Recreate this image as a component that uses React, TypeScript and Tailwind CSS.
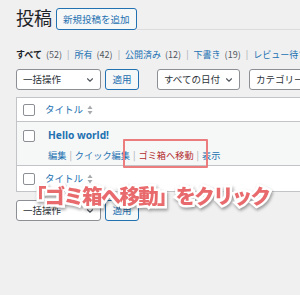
import React from "react";
import { ChevronDown } from "lucide-react";

const font = "font-['Noto_Sans_CJK_JP','Noto_Sans',sans-serif]";

function Checkbox() {
  return <span className="block w-[12px] h-[12px] shrink-0 border border-[#8c8f94] rounded-[2px] bg-white" />;
}

function SortArrows() {
  return (
    <svg width="6" height="10" viewBox="0 0 6 10" className="ml-[4px]">
      <path d="M3 0.5 L5.5 4 L0.5 4 Z" fill="#a7aaad" />
      <path d="M3 9.5 L5.5 6 L0.5 6 Z" fill="#a7aaad" />
    </svg>
  );
}

function Select({ label, width }: { label: string; width: string }) {
  return (
    <div className={`${width} h-[21px] shrink-0 flex items-center justify-between pl-[6px] pr-[5px] bg-white border border-[#8c8f94] rounded-[3px] text-[9.5px] text-[#2c3338] overflow-hidden whitespace-nowrap`}>
      <span>{label}</span>
      <ChevronDown className="w-[10px] h-[10px] shrink-0 text-[#50575e]" strokeWidth={2.6} />
    </div>
  );
}

function ApplyButton() {
  return (
    <div className="w-[34px] h-[21px] shrink-0 flex items-center justify-center bg-[#f6f7f7] border border-[#2271b1] rounded-[3px] text-[9.5px] text-[#2271b1]">
      適用
    </div>
  );
}

const filters = [
  { label: "すべて", count: "(52)", current: true },
  { label: "所有", count: "(42)" },
  { label: "公開済み", count: "(12)" },
  { label: "下書き", count: "(19)" },
  { label: "レビュー待ち", count: "(2)" },
];

export default function App() {
  return (
    <div className={`relative w-[300px] h-[295px] overflow-hidden bg-[#f0f0f1] ${font}`}>
      <div className="w-[420px] pl-[16px]">
        {/* header */}
        <div className="flex items-end h-[30px]">
          <h1 className="text-[18px] leading-none text-[#1d2327] pb-[4px] mr-[4px]">投稿</h1>
          <div className="h-[22px] px-[6px] flex items-center bg-[#f6f7f7] border border-[#2271b1] rounded-[3px] text-[9.5px] text-[#2271b1]">
            新規投稿を追加
          </div>
          <div className="flex-1 border-b border-[#dcdcde]" />
        </div>

        {/* filters */}
        <div className="mt-[17px] h-[14px] flex items-center whitespace-nowrap text-[9px] leading-none">
          {filters.map((f, i) => (
            <span key={f.label} className="flex items-center">
              {i > 0 && <span className="mx-[5px] text-[#a7aaad]">|</span>}
              <span className={f.current ? "font-bold text-[#1d2327]" : "text-[#2271b1]"}>{f.label}</span>
              <span className="ml-[4px] text-[#50575e]">{f.count}</span>
            </span>
          ))}
        </div>

        {/* bulk actions */}
        <div className="mt-[8px] flex items-center gap-[4px]">
          <Select label="一括操作" width="w-[85px]" />
          <ApplyButton />
          <div className="w-[10px]" />
          <Select label="すべての日付" width="w-[83px]" />
          <div className="w-[1px]" />
          <Select label="カテゴリー一覧" width="w-[90px]" />
        </div>

        {/* table */}
        <div className="mt-[7px] w-[400px] border border-[#c3c4c7] bg-white">
          <div className="h-[24px] flex items-center pl-[6px] border-b border-[#c3c4c7]">
            <Checkbox />
            <span className="ml-[10px] text-[9.5px] text-[#2271b1]">タイトル</span>
            <SortArrows />
          </div>
          <div className="relative h-[44px] bg-[#f6f7f7] border-b border-[#c3c4c7] pl-[6px] pt-[8px] flex">
            <Checkbox />
            <div className="ml-[13px] -mt-[3px]">
              <div className="text-[10.2px] font-bold text-[#2271b1] font-['Noto_Sans',sans-serif] leading-[16px]">Hello world!</div>
              <div className="mt-[5px] text-[9.2px] leading-[14px] whitespace-nowrap flex items-center">
                <span className="text-[#2271b1]">編集</span>
                <span className="mx-[3px] text-[#a7aaad]">|</span>
                <span className="text-[#2271b1]">クイック編集</span>
                <span className="mx-[3px] text-[#a7aaad]">|</span>
                <span className="text-[#b32d2e]">ゴミ箱へ移動</span>
                <span className="mx-[3px] text-[#a7aaad]">|</span>
                <span className="text-[#2271b1]">表示</span>
              </div>
            </div>
            <div className="absolute left-[106px] top-[17px] w-[85px] h-[29px] border-2 border-[#ec7d7e] rounded-[1px]" />
          </div>
          <div className="h-[25px] flex items-center pl-[6px]">
            <Checkbox />
            <span className="ml-[10px] text-[9.5px] text-[#2271b1]">タイトル</span>
            <SortArrows />
          </div>
        </div>

        <div className="mt-[8px] flex items-center gap-[4px]">
          <Select label="一括操作" width="w-[85px]" />
          <ApplyButton />
        </div>
      </div>

      {/* annotation */}
      <div className="absolute left-[26px] top-[181px] whitespace-nowrap text-[20.5px] tracking-[-1.8px] leading-[28px] font-black text-[#e86a6c] [-webkit-text-stroke:5px_white] [paint-order:stroke_fill] [filter:drop-shadow(1px_2px_1.5px_rgba(0,0,0,0.35))]">
        「ゴミ箱へ移動」をクリック
      </div>
    </div>
  );
}
